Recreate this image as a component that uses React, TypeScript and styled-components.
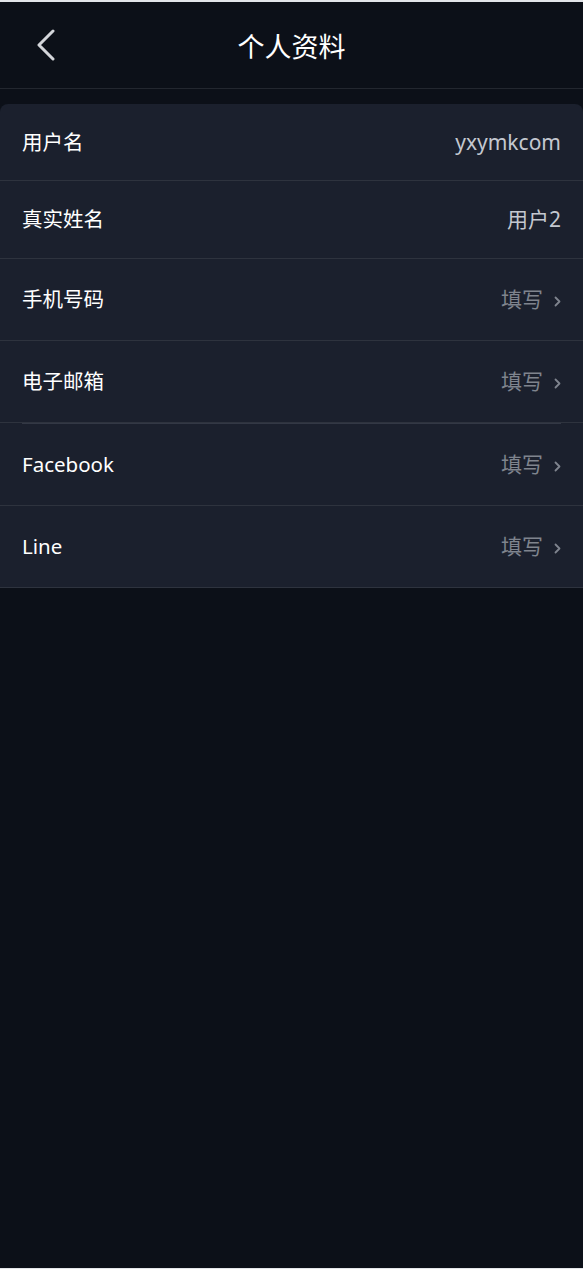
import React from "react";
import styled, { createGlobalStyle } from "styled-components";

const GlobalStyle = createGlobalStyle`
  html, body {
    margin: 0;
    padding: 0;
    background: #e3e5e9;
  }
  body {
    padding: 2px 0 1px;
    font-family: "Noto Sans", "Noto Sans CJK SC", sans-serif;
  }
  * {
    box-sizing: border-box;
  }
`;

const Page = styled.div`
  width: 100%;
  height: 1266px;
  background: #0c1018;
  display: flex;
  flex-direction: column;
`;

const Header = styled.div`
  height: 87px;
  display: grid;
  grid-template-columns: 80px 1fr 80px;
  align-items: center;
  padding-left: 36px;
  border-bottom: 1px solid #23272f;
`;

const BackBtn = styled.div`
  display: flex;
  align-items: center;
  cursor: pointer;
`;

const Title = styled.div`
  text-align: center;
  margin-left: -36px;
  color: #ffffff;
  font-family: "Noto Sans CJK SC", sans-serif;
  font-size: 27px;
  line-height: 1;
`;

const Card = styled.div`
  margin-top: 15px;
  background: #1b202d;
  border-radius: 8px 8px 0 0;
`;

const Row = styled.div`
  padding: 0 22px;
  border-bottom: 1px solid #2e333e;
`;

const RowInner = styled.div<{ $height: number; $divider?: boolean }>`
  height: ${(p) => p.$height + (p.$divider ? 1 : 0)}px;
  display: flex;
  align-items: center;
  justify-content: space-between;
  border-top: ${(p) => (p.$divider ? "1px solid #333845" : "none")};
`;

const Label = styled.div`
  color: #ffffff;
  font-size: 20.5px;
  line-height: 1;
`;

const Value = styled.div<{ $empty?: boolean }>`
  display: flex;
  align-items: center;
  gap: 11px;
  color: ${(p) => (p.$empty ? "#7f848e" : "#c4c8d0")};
  font-size: 21px;
  line-height: 1;
`;

const Arrow = styled.svg`
  width: 7px;
  height: 11px;
  margin-top: 3px;
`;

type Item = {
  label: string;
  value?: string;
  height: number;
  divider?: boolean;
};

const items: Item[] = [
  { label: "用户名", value: "yxymkcom", height: 76 },
  { label: "真实姓名", value: "用户2", height: 77 },
  { label: "手机号码", height: 81 },
  { label: "电子邮箱", height: 81 },
  { label: "Facebook", height: 81, divider: true },
  { label: "Line", height: 81 },
];

export default function App() {
  return (
    <>
      <GlobalStyle />
      <Page>
        <Header>
          <BackBtn>
            <svg width="20" height="32" viewBox="0 0 20 32">
              <polyline
                points="17,2 3,16 17,30"
                fill="none"
                stroke="#d4d6da"
                strokeWidth="3"
                strokeLinecap="round"
                strokeLinejoin="round"
              />
            </svg>
          </BackBtn>
          <Title>个人资料</Title>
          <div />
        </Header>
        <Card>
          {items.map((item, index) => (
            <Row key={index}>
              <RowInner $height={item.height} $divider={item.divider}>
                <Label>{item.label}</Label>
                {item.value ? (
                  <Value>{item.value}</Value>
                ) : (
                  <Value $empty>
                    填写
                    <Arrow viewBox="0 0 7 11">
                      <polyline
                        points="1.5,1.5 5.5,5.5 1.5,9.5"
                        fill="none"
                        stroke="#7f848e"
                        strokeWidth="1.8"
                        strokeLinecap="round"
                        strokeLinejoin="round"
                      />
                    </Arrow>
                  </Value>
                )}
              </RowInner>
            </Row>
          ))}
        </Card>
      </Page>
    </>
  );
}
